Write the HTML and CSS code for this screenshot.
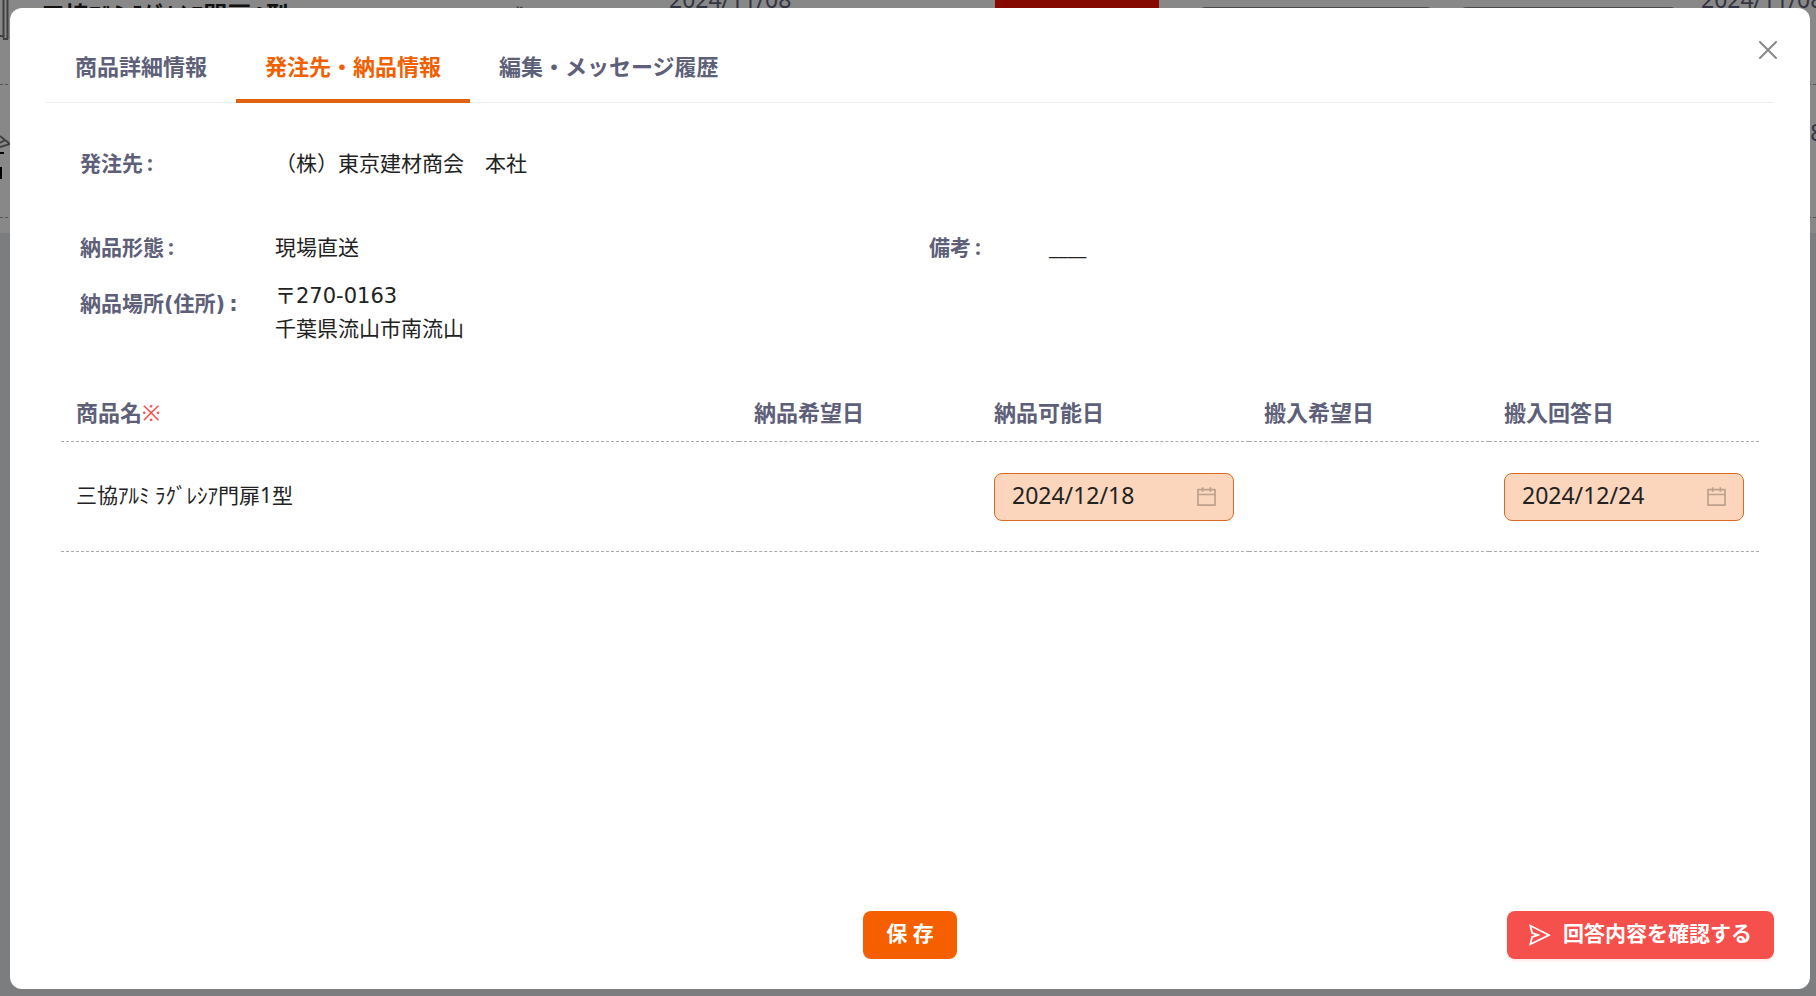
FILE: index.html
```html
<!DOCTYPE html>
<html lang="ja">
<head>
<meta charset="utf-8">
<title>発注先・納品情報</title>
<link rel="stylesheet" href="styles.css">
</head>
<body>
<div class="page" aria-hidden="true">
  <div class="list">
    <div class="list-row">
      <svg class="thumb" width="10" height="132" viewBox="0 0 10 132"><path d="M3.500 0V86M7.500 0V87M3 87H8M0 84H4" fill="none" stroke="#777" stroke-width="2"/></svg>
      <span class="list-name">三協ｱﾙﾐ ﾗｸﾞﾚｼｱ門扉1型</span>
      <span class="list-qty">式</span>
      <span class="list-date">2024/11/08</span>
      <span class="list-status"></span>
      <span class="list-field"></span>
      <span class="list-field"></span>
      <span class="list-date list-date-last">2024/11/08</span>
    </div>
    <div class="list-row">
      <svg class="thumb" width="10" height="132" viewBox="0 0 10 132"><path d="M0 51L10 59L0 62M0 58L5 55" fill="none" stroke="#777" stroke-width="2"/><path d="M0 68H4M1 82V94" fill="none" stroke="#000" stroke-width="2"/></svg>
      <span class="list-date list-date-last">2024/11/08</span>
    </div>
  </div>
</div>
<div class="mask">
  <section class="modal" role="dialog" aria-label="発注先・納品情報">
    <button class="close" type="button" aria-label="閉じる">
      <svg width="18" height="18" viewBox="0 0 18 18"><path d="M1 1L17 17M17 1L1 17" fill="none" stroke="currentColor" stroke-width="2" stroke-linecap="round"/></svg>
    </button>
    <nav class="tabs" role="tablist">
      <button class="tab" type="button" role="tab">商品詳細情報</button>
      <button class="tab tab-active" type="button" role="tab" aria-selected="true">発注先・納品情報</button>
      <button class="tab" type="button" role="tab">編集・メッセージ履歴</button>
    </nav>
    <div class="body">
      <dl class="info">
        <dt>発注先</dt>
        <dd>（株）東京建材商会　本社</dd>
      </dl>
      <div class="info-pair">
        <dl class="info">
          <dt>納品形態</dt>
          <dd>現場直送</dd>
          <dt class="label-address">納品場所(住所)</dt>
          <dd class="address">〒270-0163<br>千葉県流山市南流山</dd>
        </dl>
        <dl class="info info-note">
          <dt>備考</dt>
          <dd>____</dd>
        </dl>
      </div>
      <table class="items">
        <colgroup><col><col class="col-wish"><col class="col-date"><col class="col-wish"><col class="col-date"></colgroup>
        <thead>
          <tr>
            <th>商品名<span class="required">※</span></th>
            <th>納品希望日</th>
            <th id="delivery">納品可能日</th>
            <th>搬入希望日</th>
            <th id="carry">搬入回答日</th>
          </tr>
        </thead>
        <tbody>
          <tr>
            <td class="item-name">三協ｱﾙﾐ ﾗｸﾞﾚｼｱ門扉1型</td>
            <td></td>
            <td>
              <div class="picker">
                <input type="text" value="2024/12/18" aria-labelledby="delivery">
                <svg width="21" height="21" viewBox="64 64 896 896" fill="currentColor"><path d="M880 184H712v-64c0-4.400-3.600-8-8-8h-56c-4.400 0-8 3.600-8 8v64H384v-64c0-4.400-3.600-8-8-8h-56c-4.400 0-8 3.600-8 8v64H144c-17.700 0-32 14.300-32 32v664c0 17.700 14.300 32 32 32h736c17.700 0 32-14.300 32-32V216c0-17.700-14.300-32-32-32zm-40 656H184V460h656v380zM184 392V256h128v48c0 4.400 3.600 8 8 8h56c4.400 0 8-3.600 8-8v-48h256v48c0 4.400 3.600 8 8 8h56c4.400 0 8-3.600 8-8v-48h128v136H184z"/></svg>
              </div>
            </td>
            <td></td>
            <td>
              <div class="picker">
                <input type="text" value="2024/12/24" aria-labelledby="carry">
                <svg width="21" height="21" viewBox="64 64 896 896" fill="currentColor"><path d="M880 184H712v-64c0-4.400-3.600-8-8-8h-56c-4.400 0-8 3.600-8 8v64H384v-64c0-4.400-3.600-8-8-8h-56c-4.400 0-8 3.600-8 8v64H144c-17.700 0-32 14.300-32 32v664c0 17.700 14.300 32 32 32h736c17.700 0 32-14.300 32-32V216c0-17.700-14.300-32-32-32zm-40 656H184V460h656v380zM184 392V256h128v48c0 4.400 3.600 8 8 8h56c4.400 0 8-3.600 8-8v-48h256v48c0 4.400 3.600 8 8 8h56c4.400 0 8-3.600 8-8v-48h128v136H184z"/></svg>
              </div>
            </td>
          </tr>
        </tbody>
      </table>
    </div>
    <footer class="footer">
      <button class="btn btn-save" type="button"><span>保 存</span></button>
      <button class="btn btn-confirm" type="button">
        <svg width="22" height="22" viewBox="64 64 896 896" fill="currentColor"><path d="M931.400 498.900L94.900 79.500c-3.400-1.700-7.300-2.100-11-1.200a15.990 15.990 0 00-11.700 19.300l86.200 352.200c1.300 5.300 5.200 9.600 10.400 11.300l147.700 50.700-147.600 50.700c-5.200 1.800-9.100 6-10.300 11.300L72.200 926.500c-.9 3.700-.5 7.600 1.200 10.900 3.900 7.900 13.500 11.100 21.500 7.200l836.500-417c3.100-1.500 5.600-4.100 7.200-7.100 3.900-8 .7-17.600-7.200-21.600zM170.800 826.300l50.300-205.600 295.200-101.300c2.300-.8 4.200-2.600 5-5 1.400-4.200-.8-8.700-5-10.200L221.100 403 171 198.200l628 314.900-628.200 313.200z"/></svg>
        <span>回答内容を確認する</span>
      </button>
    </footer>
  </section>
</div>
</body>
</html>
```
FILE: styles.css
```css
* {
  box-sizing: border-box;
}

body {
  margin: 0;
  height: 100vh;
  overflow: hidden;
  background: #e0e3e8;
  color: #222;
  font-family: "Noto Sans", "Noto Sans CJK JP", sans-serif;
  font-size: 21px;
}

button,
input {
  margin: 0;
  border: 0;
  padding: 0;
  background: none;
  color: inherit;
  font: inherit;
}

button {
  cursor: pointer;
}

svg {
  display: block;
}

/* list behind the dialog, scrolled part way */
.page {
  height: 233px;
  overflow: hidden;
  background: #f8f8f8;
}

.list {
  margin-top: -48px;
  color: #5d6078;
  line-height: 24px;
}

.list-row {
  display: grid;
  grid-template-columns: 41px 464px 164px 326px 204px 261px 241px auto;
  height: 133px;
  border-bottom: 1px dashed #999;
  white-space: nowrap;
}

.list-name {
  padding-top: 51px;
  color: #222;
  font-size: 24px;
  font-weight: 700;
}

.list-qty {
  padding-top: 52px;
}

.list-date {
  padding-top: 35px;
  font-size: 23px;
}

.list-date-last {
  grid-column: 8;
}

.list-status {
  width: 164px;
  height: 60px;
  background: #f41200;
}

.list-field {
  width: 234px;
  height: 48px;
  margin-top: 55px;
  border: 1px solid #888;
  border-radius: 6px;
}

.list-field + .list-field {
  width: 217px;
}

.mask {
  position: fixed;
  inset: 0;
  display: flex;
  padding: 8px 6px 7px 10px;
  background: rgba(0, 0, 0, 0.45);
}

.modal {
  position: relative;
  flex: 1;
  display: flex;
  flex-direction: column;
  padding: 28px 36px 30px;
  border-radius: 12px;
  background: #fff;
}

.close {
  position: absolute;
  top: 33px;
  right: 33px;
  color: #888;
}

.tabs {
  display: flex;
  border-bottom: 1px solid #eee;
}

.tab {
  margin-bottom: -1px;
  padding: 18px 29px 21px;
  border-bottom: 4px solid transparent;
  color: #5d6078;
  font-size: 22px;
  font-weight: 700;
  line-height: 24px;
}

.tab-active {
  border-color: #e16312;
  color: #f06000;
}

.body {
  flex: 1;
  padding: 44px 15px 0;
}

.info {
  display: grid;
  grid-template-columns: 195px 1fr;
  row-gap: 16px;
  align-content: start;
  margin: 0;
  padding-left: 19px;
  line-height: 33px;
}

.info dt {
  color: #5d6078;
  font-weight: 700;
}

.info dt::after {
  content: ":";
  padding-left: 4px;
}

.info dd {
  margin: 0;
}

.info .label-address,
.info .address {
  font-family: "DejaVu Sans", "Noto Sans CJK JP", sans-serif;
}

.info-pair {
  display: grid;
  grid-template-columns: 1fr 1fr;
  margin-top: 51px;
}

.info-note {
  grid-template-columns: 120px 1fr;
}

.label-address {
  padding-top: 8px;
}

.items {
  width: 100%;
  margin-top: 38px;
  border-spacing: 0;
  table-layout: fixed;
}

.col-wish {
  width: 240px;
}

.col-date {
  width: 270px;
}

.items th,
.items td {
  padding: 15px;
  border-bottom: 1px dashed #aaa;
  text-align: left;
}

.items th {
  padding-bottom: 16px;
  color: #5d6078;
  font-size: 22px;
  font-weight: 700;
  line-height: 26px;
}

.items td {
  height: 110px;
}

.items .item-name {
  padding-bottom: 20px;
}

.required {
  color: #f5504b;
  font-weight: 400;
}

.picker {
  display: flex;
  align-items: center;
  height: 48px;
  padding: 0 16px 0 17px;
  border: 1px solid #d96a25;
  border-radius: 8px;
  background: #fcd6bc;
}

.picker input {
  flex: 1;
  min-width: 0;
  padding-bottom: 4px;
  outline: 0;
  font-size: 23px;
}

.picker svg {
  color: rgba(0, 0, 0, 0.25);
}

.footer {
  display: grid;
  grid-template-columns: 1fr auto 1fr;
}

.btn {
  display: flex;
  align-items: center;
  height: 48px;
  padding: 0 22px;
  border-radius: 8px;
  color: #fff;
  font-weight: 700;
}

.btn span {
  padding-bottom: 7px;
}

.btn-save {
  grid-column: 2;
  padding: 0 23px;
  background: #f65f00;
}

.btn-confirm {
  justify-self: end;
  gap: 12px;
  background: #f5504b;
  box-shadow: 0 2px 2px rgba(245, 80, 75, 0.12);
}
```
